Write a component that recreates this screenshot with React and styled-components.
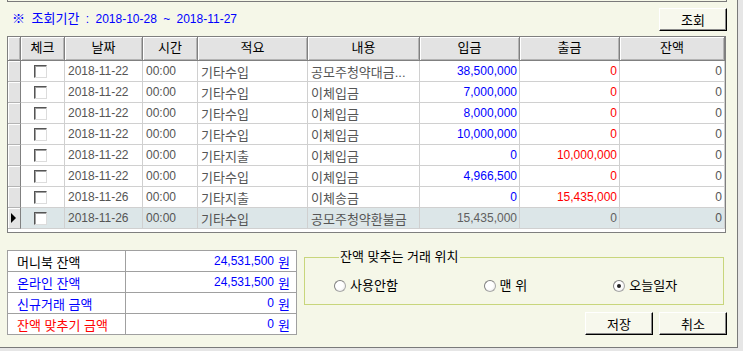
import styled, { createGlobalStyle } from 'styled-components';

const GlobalStyle = createGlobalStyle`
  body {
    margin: 0;
    background: #e6e6e6;
    font-family: "Liberation Sans", "Noto Sans CJK KR", sans-serif;
    font-size: 12px;
  }
`;

const COLUMNS = '13px 44px 78px 55px 110px 112px 100px 100px 105px';

const rows = [
  { date: '2018-11-22', summary: '기타수입', memo: '공모주청약대금...', income: '38,500,000', expense: '0' },
  { date: '2018-11-22', summary: '기타수입', memo: '이체입금', income: '7,000,000', expense: '0' },
  { date: '2018-11-22', summary: '기타수입', memo: '이체입금', income: '8,000,000', expense: '0' },
  { date: '2018-11-22', summary: '기타수입', memo: '이체입금', income: '10,000,000', expense: '0' },
  { date: '2018-11-22', summary: '기타지출', memo: '이체입금', income: '0', expense: '10,000,000' },
  { date: '2018-11-22', summary: '기타수입', memo: '이체입금', income: '4,966,500', expense: '0' },
  { date: '2018-11-26', summary: '기타지출', memo: '이체송금', income: '0', expense: '15,435,000' },
  { date: '2018-11-26', summary: '기타수입', memo: '공모주청약환불금', income: '15,435,000', expense: '0', selected: true },
];

const summaries = [
  { label: '머니북 잔액', value: '24,531,500', color: '#000000' },
  { label: '온라인 잔액', value: '24,531,500', color: '#0000ff' },
  { label: '신규거래 금액', value: '0', color: '#0000ff' },
  { label: '잔액 맞추기 금액', value: '0', color: '#ff0000' },
];

const positions = [
  { label: '사용안함', width: 150 },
  { label: '맨 위', width: 130 },
  { label: '오늘일자', width: 110, checked: true },
];

function App() {
  return (
    <>
      <GlobalStyle />
      <Styled.Window>
        <Styled.TopEdge />
        <Styled.Toolbar>
          <Styled.Period>
            <Styled.Kr>※ 조회기간</Styled.Kr> : 2018-10-28 ~ 2018-11-27
          </Styled.Period>
          <Styled.Button type="button">조회</Styled.Button>
        </Styled.Toolbar>

        <Styled.Grid>
          <Styled.Row>
            <Styled.HeadCell />
            {['체크', '날짜', '시간', '적요', '내용', '입금', '출금', '잔액'].map((title) => (
              <Styled.HeadCell key={title}>{title}</Styled.HeadCell>
            ))}
          </Styled.Row>
          {rows.map((row, i) => (
            <Styled.Row key={i}>
              <Styled.RowMarker>{row.selected && <Styled.Pointer />}</Styled.RowMarker>
              <Styled.Cell $selected={row.selected} $pad="13px">
                <Styled.CheckBox />
              </Styled.Cell>
              <Styled.Cell $selected={row.selected}>{row.date}</Styled.Cell>
              <Styled.Cell $selected={row.selected}>00:00</Styled.Cell>
              <Styled.Cell $selected={row.selected} $kr>{row.summary}</Styled.Cell>
              <Styled.Cell $selected={row.selected} $kr>{row.memo}</Styled.Cell>
              <Styled.Cell $selected={row.selected} $right $color={row.selected ? '#606060' : '#0000ff'}>
                {row.income}
              </Styled.Cell>
              <Styled.Cell $selected={row.selected} $right $color={row.selected ? '#606060' : '#ff0000'}>
                {row.expense}
              </Styled.Cell>
              <Styled.Cell $selected={row.selected} $right>0</Styled.Cell>
            </Styled.Row>
          ))}
        </Styled.Grid>

        <Styled.Bottom>
          <Styled.Summary>
            {summaries.map((item) => (
              <Styled.SummaryRow key={item.label}>
                <Styled.SummaryLabel $color={item.color}>{item.label}</Styled.SummaryLabel>
                <Styled.SummaryValue>
                  {item.value} <Styled.Kr>원</Styled.Kr>
                </Styled.SummaryValue>
              </Styled.SummaryRow>
            ))}
          </Styled.Summary>

          <Styled.RightColumn>
            <Styled.GroupBox>
              <Styled.Legend>잔액 맞추는 거래 위치</Styled.Legend>
              <Styled.RadioRow>
                {positions.map((pos) => (
                  <Styled.RadioItem key={pos.label} $width={pos.width}>
                    <Styled.Radio $checked={pos.checked} />
                    {pos.label}
                  </Styled.RadioItem>
                ))}
              </Styled.RadioRow>
            </Styled.GroupBox>
            <Styled.ButtonRow>
              <Styled.Button type="button">저장</Styled.Button>
              <Styled.Button type="button">취소</Styled.Button>
            </Styled.ButtonRow>
          </Styled.RightColumn>
        </Styled.Bottom>
      </Styled.Window>
    </>
  );
}

export default App;

const Styled = {
  Window: styled.div`
    display: flex;
    flex-direction: column;
    width: 737px;
    height: 347px;
    background: #f5f7e8;
    border-right: 1px solid #7a7a7a;
    border-bottom: 1px solid #7a7a7a;
  `,
  TopEdge: styled.div`
    width: 718px;
    height: 1px;
    margin-left: 7px;
    border: 1px solid #7a7a7a;
    border-top: none;
  `,
  Toolbar: styled.div`
    display: flex;
    justify-content: space-between;
    align-items: flex-start;
    height: 34px;
    padding: 6px 10px 0 12px;
    box-sizing: border-box;
  `,
  Kr: styled.span`
    font-size: 13px;
  `,
  Period: styled.div`
    margin-top: 4px;
    line-height: 14px;
    color: #0000ff;
    word-spacing: 3px;
    white-space: pre;
  `,
  Button: styled.button`
    width: 68px;
    height: 23px;
    padding: 0;
    font-family: "Liberation Sans", "Noto Sans CJK KR", sans-serif;
    font-size: 13px;
    color: #000;
    background: #f7f8ed;
    border: 1px solid;
    border-color: #ffffff #000000 #000000 #ffffff;
    box-shadow: inset -1px -1px 0 #8a8a8a;
  `,
  Grid: styled.div`
    width: 717px;
    height: 195px;
    margin-left: 7px;
    background: #ffffff;
    border: 1px solid #7f7f7f;
  `,
  Row: styled.div`
    display: grid;
    grid-template-columns: ${COLUMNS};
  `,
  HeadCell: styled.div`
    height: 24px;
    line-height: 22px;
    text-align: center;
    font-size: 13px;
    color: #000;
    background: #e3e3e3;
    box-sizing: border-box;
    border-right: 1px solid #808080;
    border-bottom: 1px solid #808080;
    box-shadow: inset 1px 1px 0 #ffffff, inset -1px -1px 0 #b4b4b4;
  `,
  RowMarker: styled.div`
    display: flex;
    align-items: center;
    padding-left: 3px;
    height: 21px;
    box-sizing: border-box;
    background: #e3e3e3;
    border-right: 1px solid #808080;
    border-bottom: 1px solid #b4b4b4;
    box-shadow: inset 1px 1px 0 #ffffff;
  `,
  Pointer: styled.span`
    width: 0;
    height: 0;
    border-left: 5px solid #000;
    border-top: 5px solid transparent;
    border-bottom: 5px solid transparent;
  `,
  Cell: styled.div`
    display: flex;
    align-items: center;
    justify-content: ${(p) => (p.$right ? 'flex-end' : 'flex-start')};
    height: 21px;
    padding: ${(p) => (p.$right ? '0 2px 0 0' : `0 0 0 ${p.$pad || '3px'}`)};
    box-sizing: border-box;
    overflow: hidden;
    white-space: nowrap;
    font-size: ${(p) => (p.$kr ? '13px' : '12px')};
    color: ${(p) => p.$color || '#555555'};
    background: ${(p) => (p.$selected ? '#dce6e8' : '#ffffff')};
    border-right: 1px solid #d0d0d0;
    border-bottom: 1px solid #d0d0d0;
  `,
  CheckBox: styled.span`
    width: 13px;
    height: 13px;
    box-sizing: border-box;
    background: #ffffff;
    border: 1px solid;
    border-color: #555555 #dcdcdc #dcdcdc #555555;
    box-shadow: inset 1px 1px 0 #a0a0a0;
  `,
  Bottom: styled.div`
    display: flex;
    gap: 7px;
    margin-top: 17px;
    padding-left: 7px;
  `,
  Summary: styled.div`
    width: 290px;
    background: #ffffff;
    border: 1px solid #a0a0a0;
    box-sizing: border-box;
  `,
  SummaryRow: styled.div`
    display: grid;
    grid-template-columns: 118px 1fr;
    height: 21px;
    border-bottom: 1px solid #a0a0a0;
    box-sizing: border-box;

    &:last-child {
      height: 20px;
      border-bottom: none;
    }
  `,
  SummaryLabel: styled.div`
    display: flex;
    align-items: center;
    padding-left: 9px;
    font-size: 13px;
    color: ${(p) => p.$color};
    border-right: 1px solid #a0a0a0;
  `,
  SummaryValue: styled.div`
    display: flex;
    align-items: center;
    justify-content: flex-end;
    gap: 4px;
    padding-right: 6px;
    color: #0000ff;
  `,
  RightColumn: styled.div`
    display: flex;
    flex-direction: column;
    width: 423px;
  `,
  GroupBox: styled.fieldset`
    width: 420px;
    height: 55px;
    min-width: 0;
    margin: 0;
    padding: 14px 0 0 29px;
    box-sizing: border-box;
    border: 1px solid #c8d67c;
  `,
  Legend: styled.legend`
    margin-left: 5px;
    padding: 0 2px 0 1px;
    line-height: 14px;
    font-size: 13px;
    color: #000;
  `,
  RadioRow: styled.div`
    display: flex;
  `,
  RadioItem: styled.label`
    display: flex;
    align-items: center;
    gap: 4px;
    width: ${(p) => p.$width}px;
    line-height: 16px;
    font-size: 13px;
    color: #000;
  `,
  Radio: styled.span`
    position: relative;
    width: 12px;
    height: 12px;
    box-sizing: border-box;
    border-radius: 50%;
    border: 1px solid #a8a8a8;
    border-top-color: #808080;
    border-left-color: #808080;
    background: radial-gradient(circle at 40% 40%, #ffffff 45%, #e2e2e2 100%);

    &::after {
      content: '';
      display: ${(p) => (p.$checked ? 'block' : 'none')};
      position: absolute;
      top: 3px;
      left: 3px;
      width: 4px;
      height: 4px;
      border-radius: 50%;
      background: #222;
    }
  `,
  ButtonRow: styled.div`
    display: flex;
    justify-content: flex-end;
    gap: 6px;
    margin-top: 7px;
  `,
};
